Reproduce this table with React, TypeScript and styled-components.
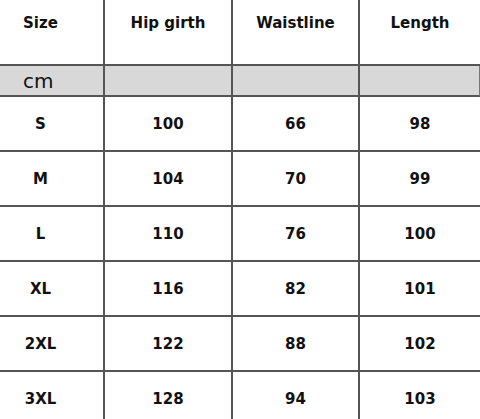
import React from 'react'
import styled, {createGlobalStyle} from 'styled-components'

const GlobalStyle = createGlobalStyle`
  html, body {
    margin: 0;
    padding: 0;
    background: #ffffff;
  }
  body {
    width: 480px;
    height: 419px;
    overflow: hidden;
    font-family: "DejaVu Sans", "Liberation Sans", sans-serif;
    color: #111111;
  }
`

const LINE = '2px solid #555555'

const Table = styled.div`
  display: grid;
  grid-template-columns: 105px 128px 127px 120px;
  width: 480px;
`

const HeadCell = styled.div<{first?: boolean; last?: boolean}>`
  height: 64px;
  box-sizing: content-box;
  display: flex;
  justify-content: center;
  align-items: flex-start;
  padding-top: 0;
  padding-right: ${(p) => (p.first ? '22px' : '0')};
  border-bottom: ${LINE};
  border-right: ${(p) => (p.last ? 'none' : LINE)};
  font-size: 15px;
  font-weight: bold;
  line-height: 20px;

  span {
    margin-top: 13px;
  }
`

const UnitCell = styled.div<{last?: boolean}>`
  height: 29px;
  display: flex;
  align-items: center;
  padding-left: 23px;
  background: #d8d8d8;
  border-bottom: ${LINE};
  border-right: ${(p) => (p.last ? '1px solid #777777' : LINE)};
  font-size: 20px;
  line-height: 24px;
`

const DataCell = styled.div<{first?: boolean; last?: boolean}>`
  height: 53px;
  display: flex;
  justify-content: center;
  align-items: center;
  padding-right: ${(p) => (p.first ? '22px' : '0')};
  border-bottom: ${LINE};
  border-right: ${(p) => (p.last ? 'none' : LINE)};
  font-size: 15px;
  font-weight: bold;
  line-height: 20px;
`

const headers = ['Size', 'Hip girth', 'Waistline', 'Length']

const rows = [
  ['S', '100', '66', '98'],
  ['M', '104', '70', '99'],
  ['L', '110', '76', '100'],
  ['XL', '116', '82', '101'],
  ['2XL', '122', '88', '102'],
  ['3XL', '128', '94', '103']
]

export default function App() {
  return (
    <>
      <GlobalStyle />
      <Table>
        {headers.map((h, i) => (
          <HeadCell key={h} first={i === 0} last={i === headers.length - 1}>
            <span>{h}</span>
          </HeadCell>
        ))}

        {headers.map((h, i) => (
          <UnitCell key={`u-${h}`} last={i === headers.length - 1}>
            {i === 0 ? 'cm' : ''}
          </UnitCell>
        ))}

        {rows.map((row) =>
          row.map((value, i) => (
            <DataCell
              key={`${row[0]}-${i}`}
              first={i === 0}
              last={i === row.length - 1}
            >
              {value}
            </DataCell>
          ))
        )}
      </Table>
    </>
  )
}
